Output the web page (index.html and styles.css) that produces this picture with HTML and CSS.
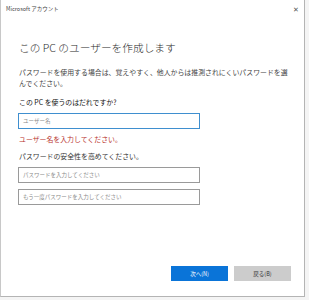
FILE: index.html
```html
<!DOCTYPE html>
<html lang="ja">
<head>
  <meta charset="UTF-8" />
  <title>Microsoft アカウント</title>
  <link rel="stylesheet" href="styles.css">
</head>
<body>
  <div class="window">
    <div class="titlebar">
      <span class="title">Microsoft アカウント</span>
      <span class="close">&#x2715;</span>
    </div>

    <div class="content">
      <h1>この PC のユーザーを作成します</h1>
      <p class="intro">パスワードを使用する場合は、覚えやすく、他人からは推測されにくいパスワードを選んでください。</p>

      <p class="label">この PC を使うのはだれですか?</p>
      <div class="field focused">ユーザー名</div>
      <p class="error">ユーザー名を入力してください。</p>

      <p class="label second">パスワードの安全性を高めてください。</p>
      <div class="field">パスワードを入力してください</div>
      <div class="field gap">もう一度パスワードを入力してください</div>
    </div>

    <div class="footer">
      <button class="btn primary">次へ(N)</button>
      <button class="btn">戻る(B)</button>
    </div>
  </div>
</body>
</html>
```

FILE: styles.css
```css
body {
  margin: 0;
  padding: 0;
  background: #f4f4f4;
  font-family: "Noto Sans CJK JP", "Noto Sans", sans-serif;
  color: #333;
}
.window {
  width: 305px;
  height: 297px;
  box-sizing: border-box;
  background: #fff;
  border-left: 1px solid #c8c8c8;
  border-right: 1px solid #b4b4b4;
  border-bottom: 1px solid #b4b4b4;
  display: flex;
  flex-direction: column;
}
.titlebar {
  height: 18px;
  display: flex;
  justify-content: space-between;
  align-items: center;
  padding: 0 5px 0 5px;
}
.title {
  font-size: 5.5px;
  color: #444;
}
.close {
  font-size: 7px;
  color: #555;
}
.content {
  padding: 0 14px 0 17px;
}
.content h1 {
  margin: 22px 0 0 1px;
  font-size: 10.7px;
  font-weight: 300;
  line-height: 16px;
  color: #2b2b2b;
}
.intro {
  margin: 11px 0 0 1px;
  font-size: 6.9px;
  line-height: 11px;
  color: #444;
}
.label {
  margin: 8px 0 0 1px;
  font-size: 6.9px;
  line-height: 11px;
  font-weight: 400;
  color: #111;
}
.label.second {
  margin-top: 6px;
  color: #333;
}
.field {
  width: 182px;
  height: 16px;
  box-sizing: border-box;
  margin-top: 4.5px;
  border: 1px solid #9a9a9a;
  padding-left: 4px;
  font-size: 5.5px;
  line-height: 14px;
  color: #8a8a8a;
}
.field.focused {
  border-color: #3f8fcf;
}
.field.gap {
  margin-top: 6px;
}
.error {
  margin: 5.5px 0 0 1px;
  font-size: 6.9px;
  line-height: 11px;
  color: #b8322c;
}
.footer {
  margin-top: auto;
  display: flex;
  justify-content: flex-end;
  gap: 6px;
  padding: 0 13px 15px 0;
}
.btn {
  width: 57px;
  height: 15px;
  border: none;
  padding: 0;
  background: #cccccc;
  color: #333;
  font-family: inherit;
  font-size: 5.5px;
}
.btn.primary {
  background: #0a74d8;
  color: #fff;
}
```
